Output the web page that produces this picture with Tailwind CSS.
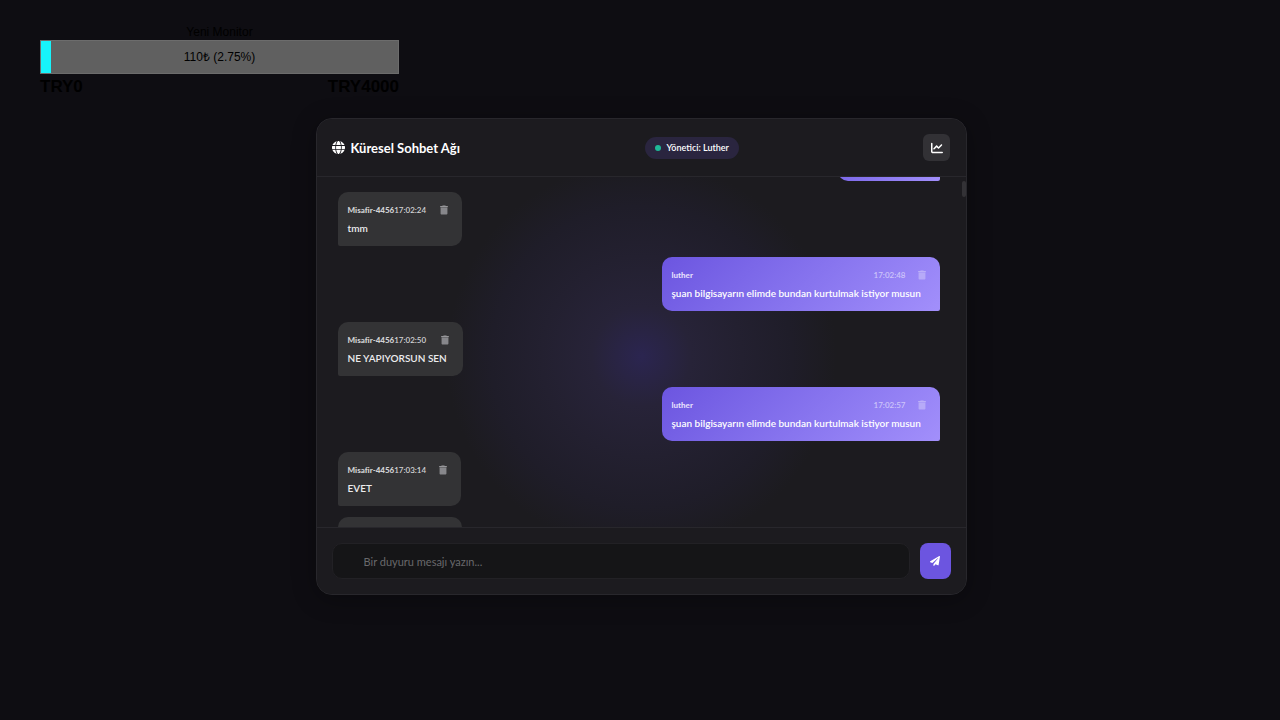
<!DOCTYPE html>
<html lang="tr">
<head>
  <meta charset="UTF-8">
  <meta name="viewport" content="width=device-width, initial-scale=1.0">
  <title>Küresel Sohbet Ağı</title>
  <script src="https://cdn.jsdelivr.net/npm/@tailwindcss/browser@4"></script>
</head>
<body class="h-screen overflow-hidden bg-[#0e0d12] font-['Lato','Open_Sans',sans-serif] text-white">
  <!-- Icons -->
  <svg class="hidden">
    <symbol id="icon-trash" viewBox="0 0 448 512">
      <path d="M135.2 17.7L128 32H32C14.3 32 0 46.3 0 64S14.3 96 32 96H416c17.7 0 32-14.3 32-32s-14.3-32-32-32H320l-7.2-14.3C307.4 6.800 296.300 0 284.200 0H163.800c-12.100 0-23.200 6.800-28.600 17.700z"/>
      <path d="M32 112H416V448c0 35.300-28.700 64-64 64H96c-35.300 0-64-28.700-64-64z" opacity=".85"/>
    </symbol>
  </svg>

  <!-- Donation goal overlay -->
  <aside class="absolute left-10 top-6 w-[359px] font-['Liberation_Sans',Arial,sans-serif] text-black">
    <p class="h-4 text-center text-xs leading-4">Yeni Monitor</p>
    <div class="relative h-[34px] border border-[#6c6c6c] bg-[#606060]">
      <div class="h-full bg-[#17f3fb]" style="width: 2.75%"></div>
      <span class="absolute inset-0 text-center text-xs leading-8">110₺ (2.75%)</span>
    </div>
    <div class="flex justify-between text-[17px] leading-[26px] font-bold">
      <span>TRY0</span>
      <span>TRY4000</span>
    </div>
  </aside>

  <main class="flex h-full justify-center pt-[118px] pr-4 pb-[125px] pl-[18px]">
    <section class="flex w-full max-w-[651px] flex-col overflow-hidden rounded-2xl border border-[#28272c] bg-[#1c1b1f] bg-[radial-gradient(circle_at_center,#2b2550_0px,#272338_50px,#232030_100px,#1f1d29_150px,#1c1b1f_195px)] shadow-[0_4px_24px_rgba(0,0,0,0.3)]">
      <!-- Header -->
      <header class="flex items-center justify-between border-b border-[#28272c] bg-[#1c1b1f] p-[15px]">
        <h1 class="flex items-center gap-1.5 text-[13px] leading-5 font-bold">
          <svg class="size-[13px]" viewBox="0 0 512 512" fill="currentColor"><path d="M352 256c0 22.2-1.2 43.6-3.3 64H163.3c-2.2-20.4-3.3-41.8-3.3-64s1.2-43.6 3.3-64H348.7c2.2 20.4 3.3 41.8 3.3 64zm28.8-64H503.9c5.3 20.5 8.1 41.9 8.1 64s-2.8 43.5-8.1 64H380.8c2.1-20.6 3.2-42 3.2-64s-1.1-43.4-3.2-64zm112.6-32H376.7c-10-63.9-29.8-117.4-55.3-151.6c78.3 20.7 142 77.5 171.9 151.6zm-149.1 0H167.7c6.1-36.4 15.5-68.6 27-94.7c10.5-23.6 22.2-40.7 33.5-51.5C239.4 3.2 248.7 0 256 0s16.6 3.2 27.8 13.8c11.3 10.8 23 27.9 33.5 51.5c11.6 26 20.9 58.2 27 94.7zm-209 0H18.6C48.6 85.9 112.2 29.1 190.6 8.4C165.1 42.6 145.3 96.1 135.3 160zM8.1 192H131.2c-2.1 20.6-3.2 42-3.2 64s1.1 43.4 3.2 64H8.1C2.8 299.5 0 278.1 0 256s2.8-43.5 8.1-64zM194.7 446.6c-11.6-26-20.9-58.2-27-94.6H344.3c-6.1 36.4-15.5 68.6-27 94.6c-10.5 23.6-22.2 40.7-33.5 51.5C272.6 508.8 263.3 512 256 512s-16.6-3.2-27.8-13.8c-11.3-10.8-23-27.9-33.5-51.5zM135.3 352c10 63.9 29.8 117.4 55.3 151.6C112.2 482.9 48.6 426.1 18.6 352H135.3zm358.1 0c-30 74.1-93.6 130.9-171.9 151.6c25.5-34.2 45.2-87.7 55.3-151.6H493.4z"/></svg>
          Küresel Sohbet Ağı
        </h1>
        <div class="flex h-[22px] items-center gap-1.5 rounded-full bg-[#2a253f] px-2.5 text-[9px] font-semibold">
          <span class="size-1.5 rounded-full bg-[#1fb898]"></span>
          Yönetici: Luther
        </div>
        <button type="button" aria-label="İstatistikler" class="grid size-[27px] place-items-center rounded-md bg-[#323135]">
          <svg class="size-3" viewBox="0 0 512 512" fill="currentColor"><path d="M64 64c0-17.7-14.3-32-32-32S0 46.3 0 64V400c0 44.2 35.8 80 80 80H480c17.7 0 32-14.3 32-32s-14.3-32-32-32H80c-8.8 0-16-7.2-16-16V64zm406.6 86.6c12.5-12.5 12.5-32.8 0-45.3s-32.8-12.5-45.3 0L320 210.7l-57.4-57.4c-12.5-12.5-32.8-12.5-45.3 0l-112 112c-12.500 12.500-12.500 32.800 0 45.300s32.800 12.500 45.300 0L240 221.300l57.400 57.400c12.500 12.500 32.800 12.500 45.300 0l128-128z"/></svg>
        </button>
      </header>

      <!-- Messages -->
      <div class="relative min-h-0 flex-1 overflow-hidden">
        <ul class="-mt-[50px] flex flex-col gap-[11px] pr-[26px] pl-[21px] text-[10px] font-semibold">
          <li class="h-[54px] w-[102px] self-end rounded-[10px] rounded-br-[2px] bg-linear-135 from-[#6c55e0] to-[#a28ffb]"></li>
          <li class="min-w-[124px] self-start rounded-[10px] rounded-bl-[2px] bg-[#333335] px-2.5 py-[9px] text-[#ececee]">
            <div class="flex h-[18px] items-center text-[8px] text-[#d2d2d4]">
              <strong>Misafir-4456</strong>
              <time>17:02:24</time>
              <button type="button" aria-label="Sil" class="mr-1 ml-auto pl-3 text-[#97979a]"><svg class="h-2.5 w-2" fill="currentColor"><use href="#icon-trash"/></svg></button>
            </div>
            <p class="h-[18px] leading-[18px]">tmm</p>
          </li>
          <li class="min-w-[278px] self-end rounded-[10px] rounded-br-[2px] bg-linear-135 from-[#6c55e0] to-[#a28ffb] px-2.5 py-[9px]">
            <div class="flex h-[18px] items-center text-[8px] text-[#e4dffc]">
              <strong>luther</strong>
              <time class="ml-auto text-[#cdc4fa]">17:02:48</time>
              <button type="button" aria-label="Sil" class="mr-1 pl-3 text-[#bcb0f8]"><svg class="h-2.5 w-2" fill="currentColor"><use href="#icon-trash"/></svg></button>
            </div>
            <p class="h-[18px] leading-[18px]">şuan bilgisayarın elimde bundan kurtulmak istiyor musun</p>
          </li>
          <li class="min-w-[125px] self-start rounded-[10px] rounded-bl-[2px] bg-[#333335] px-2.5 py-[9px] text-[#ececee]">
            <div class="flex h-[18px] items-center text-[8px] text-[#d2d2d4]">
              <strong>Misafir-4456</strong>
              <time>17:02:50</time>
              <button type="button" aria-label="Sil" class="mr-1 ml-auto pl-3 text-[#97979a]"><svg class="h-2.5 w-2" fill="currentColor"><use href="#icon-trash"/></svg></button>
            </div>
            <p class="h-[18px] leading-[18px]">NE YAPIYORSUN SEN</p>
          </li>
          <li class="min-w-[278px] self-end rounded-[10px] rounded-br-[2px] bg-linear-135 from-[#6c55e0] to-[#a28ffb] px-2.5 py-[9px]">
            <div class="flex h-[18px] items-center text-[8px] text-[#e4dffc]">
              <strong>luther</strong>
              <time class="ml-auto text-[#cdc4fa]">17:02:57</time>
              <button type="button" aria-label="Sil" class="mr-1 pl-3 text-[#bcb0f8]"><svg class="h-2.5 w-2" fill="currentColor"><use href="#icon-trash"/></svg></button>
            </div>
            <p class="h-[18px] leading-[18px]">şuan bilgisayarın elimde bundan kurtulmak istiyor musun</p>
          </li>
          <li class="min-w-[123px] self-start rounded-[10px] rounded-bl-[2px] bg-[#333335] px-2.5 py-[9px] text-[#ececee]">
            <div class="flex h-[18px] items-center text-[8px] text-[#d2d2d4]">
              <strong>Misafir-4456</strong>
              <time>17:03:14</time>
              <button type="button" aria-label="Sil" class="mr-1 ml-auto pl-3 text-[#97979a]"><svg class="h-2.5 w-2" fill="currentColor"><use href="#icon-trash"/></svg></button>
            </div>
            <p class="h-[18px] leading-[18px]">EVET</p>
          </li>
          <li class="h-[54px] w-[124px] self-start rounded-[10px] bg-[#333335]"></li>
        </ul>
        <div class="absolute top-1 right-0 h-4 w-1 rounded-sm bg-[#333236]"></div>
      </div>

      <!-- Composer -->
      <form class="flex gap-2.5 border-t border-[#28272c] bg-[#1c1b1f] p-[15px]">
        <input type="text" aria-label="Duyuru mesajı" placeholder="Bir duyuru mesajı yazın..." class="h-9 min-w-0 flex-1 rounded-[10px] border border-[#222125] bg-[#151517] px-[31px] text-[11px] placeholder:text-[#69696c]">
        <button type="submit" aria-label="Gönder" class="grid h-9 w-[31px] place-items-center rounded-lg bg-[#6c55e0]">
          <svg class="size-2.5" viewBox="0 0 512 512" fill="currentColor"><path d="M476 3.200L12.500 270.600c-18.100 10.400-15.800 35.600 2.200 43.200L121 358.400l287.300-253.200c5.500-4.900 13.300 2.600 8.600 8.300L176 407v80.500c0 23.600 28.500 32.900 42.500 15.800L282 426l124.600 52.200c14.200 6 30.400-2.900 33-18.200l72-432C515 7.800 493.300-6.800 476 3.200z"/></svg>
        </button>
      </form>
    </section>
  </main>
</body>
</html>
